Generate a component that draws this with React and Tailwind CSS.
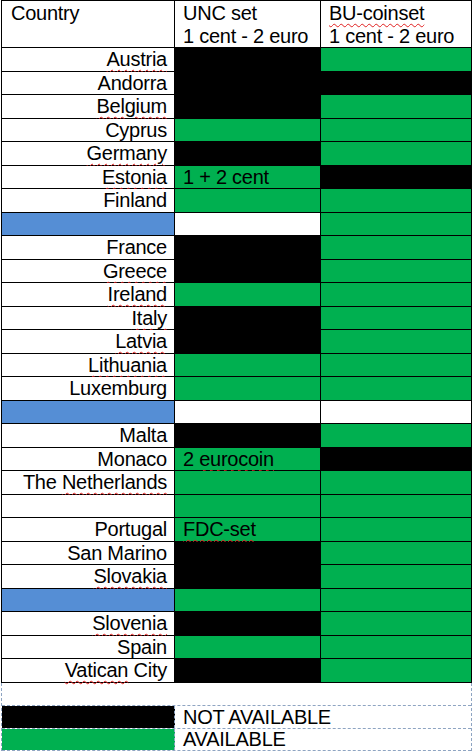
import React from 'react';

const rows = [
  { name: 'Austria', sq: true, unc: 'black', bu: 'green' },
  { name: 'Andorra', unc: 'black', bu: 'black' },
  { name: 'Belgium', sq: true, unc: 'black', bu: 'green' },
  { name: 'Cyprus', unc: 'green', bu: 'green' },
  { name: 'Germany', sq: true, unc: 'black', bu: 'green' },
  { name: 'Estonia', sq: true, unc: 'green', uncText: '1 + 2 cent', bu: 'black' },
  { name: 'Finland', unc: 'green', bu: 'green' },
  { blue: true, unc: 'white', bu: 'green' },
  { name: 'France', unc: 'black', bu: 'green' },
  { name: 'Greece', sq: true, unc: 'black', bu: 'green' },
  { name: 'Ireland', sq: true, unc: 'green', bu: 'green' },
  { name: 'Italy', sq: true, unc: 'black', bu: 'green' },
  { name: 'Latvia', sq: true, unc: 'black', bu: 'green' },
  { name: 'Lithuania', sq: true, unc: 'green', bu: 'green' },
  { name: 'Luxemburg', unc: 'green', bu: 'green' },
  { blue: true, unc: 'white', bu: 'white' },
  { name: 'Malta', unc: 'black', bu: 'green' },
  { name: 'Monaco', unc: 'green', uncText: 'eurocoin', uncPrefix: '2 ', bu: 'black' },
  { name: 'Netherlands', prefix: 'The ', sq: true, unc: 'green', bu: 'green' },
  { name: '', unc: 'green', bu: 'green' },
  { name: 'Portugal', unc: 'green', uncText: 'FDC-set', uncSq: true, bu: 'green' },
  { name: 'San Marino', unc: 'black', bu: 'green' },
  { name: 'Slovakia', sq: true, unc: 'black', bu: 'green' },
  { blue: true, unc: 'green', bu: 'green' },
  { name: 'Slovenia', sq: true, unc: 'black', bu: 'green' },
  { name: 'Spain', unc: 'green', bu: 'green' },
  { name: 'Vatican', suffix: ' City', sq: true, unc: 'black', bu: 'green' },
];

const fill = {
  black: 'bg-black',
  green: 'bg-[#00b050]',
  white: 'bg-white',
};

const squiggle = 'underline decoration-wavy decoration-[#e02020] decoration-1 underline-offset-[3px]';

function Row({ row, i }) {
  const h = i % 2 === 0 ? 'h-[24px]' : 'h-[23px]';
  return (
    <div className={`flex ${h}`}>
      <div
        className={`w-[173px] shrink-0 border-r border-b border-black text-right pr-[7px] leading-[22px] whitespace-nowrap ${
          row.blue ? 'bg-[#558ed5]' : 'bg-white'
        }`}
      >
        {row.prefix}
        {row.name && <span className={row.sq ? squiggle : ''}>{row.name}</span>}
        {row.suffix}
      </div>
      <div className={`w-[146px] shrink-0 border-r border-b border-black pl-2 leading-[22px] ${fill[row.unc]}`}>
        {row.uncPrefix}
        {row.uncText && (
          <span className={row.uncSq || row.uncPrefix ? squiggle : ''}>{row.uncText}</span>
        )}
      </div>
      <div className={`w-[151px] shrink-0 border-r border-b border-black ${fill[row.bu]}`} />
    </div>
  );
}

export default function App() {
  return (
    <div className="w-[474px] h-[752px] bg-white text-black text-[20px] tracking-[-0.25px] font-['Liberation_Sans',Arial,sans-serif]">
      <div className="ml-px w-[471px] border-l border-t border-black">
        <div className="flex h-[47px]">
          <div className="w-[173px] shrink-0 border-r border-b border-black pl-[9px] pt-px leading-[23px]">
            Country
          </div>
          <div className="w-[146px] shrink-0 border-r border-b border-black pl-2 pt-px leading-[23px] whitespace-nowrap">
            UNC set
            <br />
            1 cent - 2 euro
          </div>
          <div className="w-[151px] shrink-0 border-r border-b border-black pl-2 pt-px leading-[23px] whitespace-nowrap">
            <span className={squiggle}>BU-coinset</span>
            <br />
            1 cent - 2 euro
          </div>
        </div>
        {rows.map((row, i) => (
          <Row key={i} row={row} i={i} />
        ))}
      </div>

      {/* legend */}
      <div className="ml-px w-[471px] border-l border-r border-dashed border-[#8ea4c2]">
        <div className="h-[23px] border-b border-dashed border-[#8ea4c2]" />
        <div className="flex h-[23px] border-b border-dashed border-[#8ea4c2]">
          <div className="w-[173px] shrink-0 bg-black border-r border-dashed border-[#8ea4c2]" />
          <div className="pl-2 leading-[22px]">NOT AVAILABLE</div>
        </div>
        <div className="flex h-[22px] border-b border-dashed border-[#8ea4c2]">
          <div className="w-[173px] shrink-0 bg-[#00b050] border-r border-dashed border-[#8ea4c2]" />
          <div className="pl-2 leading-[21px]">AVAILABLE</div>
        </div>
      </div>
    </div>
  );
}
